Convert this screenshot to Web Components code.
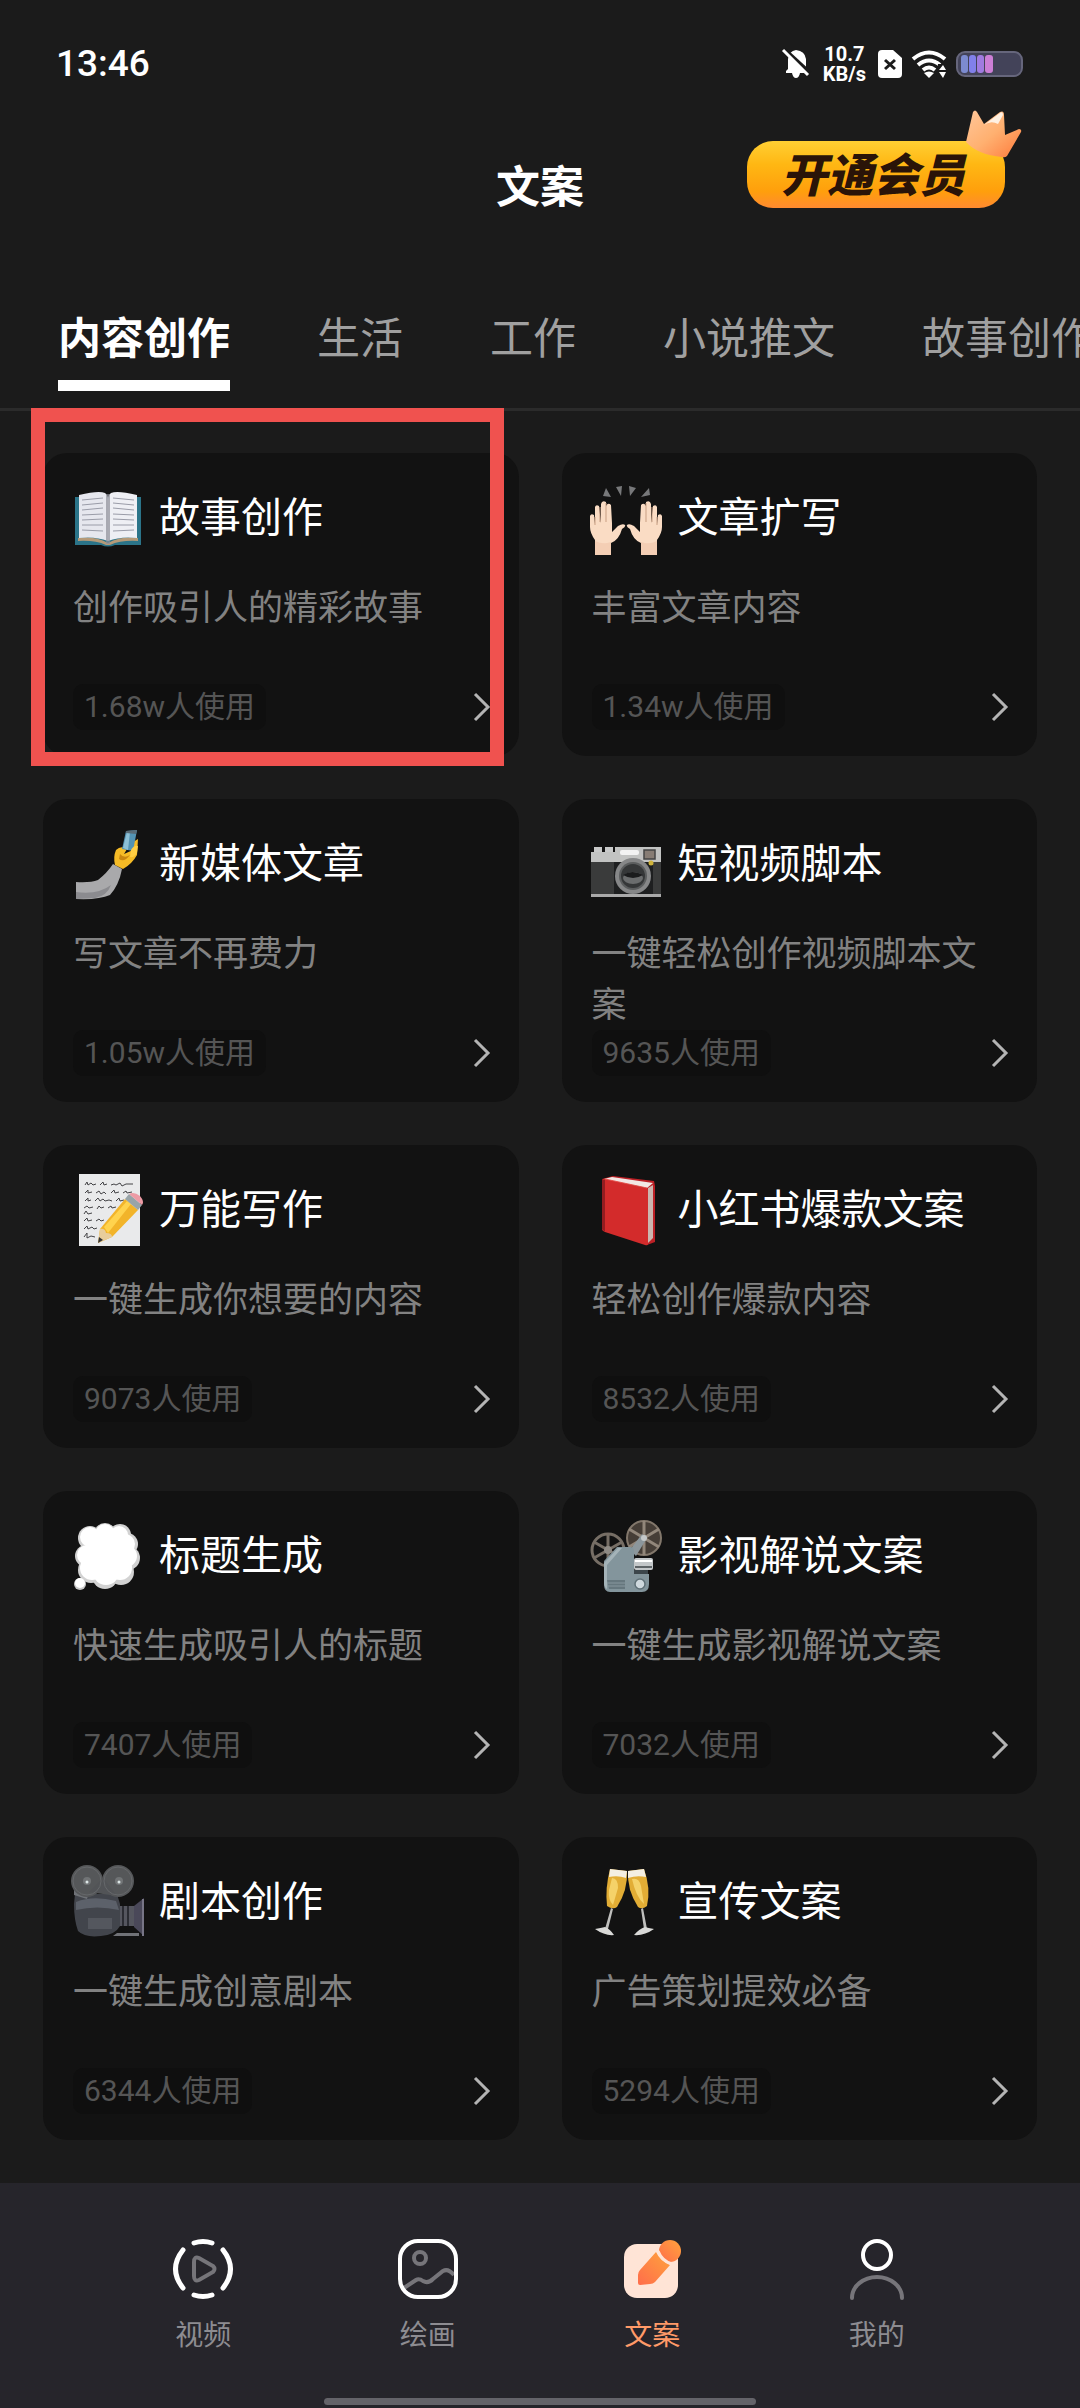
<!DOCTYPE html>
<html lang="zh-CN">
<head>
<meta charset="utf-8">
<meta name="viewport" content="width=device-width, initial-scale=1">
<title>文案</title>
<style>
  html { background: #1b1b1b; }
  body {
    margin: 0;
    color: #fff;
    font-family: Roboto, "Noto Sans CJK SC", sans-serif;
    -webkit-font-smoothing: antialiased;
  }
</style>
</head>
<body>
<copy-app></copy-app>

<script>
const RESET = `
  *, *::before, *::after { box-sizing: border-box; }
  button { margin: 0; padding: 0; border: 0; background: none; color: inherit; font: inherit; cursor: pointer; }
  a { color: inherit; text-decoration: none; }
  svg { display: block; overflow: visible; }
`;

function define(name, css, html) {
  const template = document.createElement('template');
  template.innerHTML = `<style>${RESET}${css}</style>${html}`;
  customElements.define(name, class extends HTMLElement {
    constructor() {
      super();
      this.attachShadow({ mode: 'open' }).append(template.content.cloneNode(true));
    }
  });
}

const HAND = `
  <path d="M3 71V56Q-2 49 -2 43V32Q-1 29 2 31L3 40L3 23Q4 20 7 22L9 39V20Q10 16 14 18L14 38V22Q16 18 19 21L20 39L20 48L26 42Q31 39 33 41Q34 43 30 45Q27 56 19 59V71Z" fill="#fadcc4"/>
  <path d="M8 23V38M14 19V38M3 33V41" stroke="#c99f83" stroke-width="1" fill="none"/>
  <path d="M3 57Q11 61 19 58V71H3Z" fill="#f0c4aa" opacity=".6"/>`;

/* Emoji-style artwork, each drawn on a 72 x 72 canvas */
const ART = {
  book: `
    <path d="M2 13H68V61H42Q35 64 28 61H2Z" fill="#2b7489"/>
    <path d="M5 54Q22 52 35 59Q48 52 65 54V57Q48 56 37 61H33Q22 56 5 57Z" fill="#b59a78"/>
    <path d="M6 11Q26 6 32 9Q35 11 35 15V57Q22 52 6 54Z" fill="#e6e7ee"/>
    <path d="M64 11Q44 6 38 9Q35 11 35 15V57Q48 52 64 54Z" fill="#eeeff4"/>
    <path d="M33 10H37V60H33Z" fill="#8d8f98" opacity=".7"/>
    <g stroke="#9a9ca8" stroke-width="1" fill="none">
      <path d="M9 16L30 14M9 21L30 19M9 26L30 24M9 31L30 30M9 36L30 35M9 41L30 41M9 46L30 47"/>
      <path d="M40 14L61 16M40 19L61 21M40 24L61 26M40 30L61 31M40 35L61 36M40 41L61 41M40 47L61 46"/>
    </g>`,
  hands: `
    <g fill="#77787a"><path d="M11 12L14 4L19 13ZM24 3L30 2L29 12ZM37 2L44 4L38 12ZM49 13L57 4L58 11Z"/></g>
    <g>${HAND}</g>
    <g transform="matrix(-1 0 0 1 68 0)">${HAND}</g>`,
  selfie: `
    <path d="M3 52Q17 53 25 50Q34 43 40 34L49 39Q46 55 37 65Q26 70 3 69Z" fill="#a9a9ab"/>
    <path d="M3 62Q25 65 38 55Q34 66 22 68L3 69Z" fill="#8b8b8f"/>
    <path d="M42 35Q40 27 43 20Q48 15 54 19L51 24L60 20Q57 15 60 12L65 9L64 25Q59 34 50 39Z" fill="#f5bb26"/>
    <path d="M47 24Q51 29 57 25Q51 33 46 29Z" fill="#c98610"/>
    <path d="M53 1L64 0L60 21L49 19Z" fill="#5393b3"/>
    <path d="M54 2L57 2L55 20L50 18Z" fill="#8cc0d6"/>
    <path d="M53 1L64 0L63 4L53 3Z" fill="#596b76"/>
    <path d="M58 20Q61 15 65 16L64 23Q61 28 57 27Z" fill="#ffce43"/>`,
  camera: `
    <path d="M2 17H10V24H2ZM13 17H21V24H13Z" fill="#c8c9c9"/>
    <path d="M-1 22H23V17H69V34H-1Z" fill="#c2c3c2"/>
    <path d="M-1 32H69V65H-1Z" fill="#3a3b3b"/>
    <path d="M22 32H61V65H22Z" fill="#1e1f20"/>
    <path d="M-1 64H69V67H-1Z" fill="#aaa"/>
    <rect x="28" y="20" width="19" height="5" rx="2" fill="#f3f3f3"/>
    <rect x="52" y="20" width="11" height="9" fill="#877c74" stroke="#444" stroke-width="1.5"/>
    <circle cx="59" cy="33" r="2.500" fill="#cfb33b"/>
    <circle cx="41" cy="46" r="18" fill="#868788"/>
    <circle cx="41" cy="46" r="14" fill="#5b5d5e"/>
    <circle cx="41" cy="46" r="12" fill="#353738"/>
    <ellipse cx="41" cy="48" rx="10" ry="6" fill="#6b6d6e"/>
    <path d="M31 45Q40 39 51 45Q41 51 31 45Z" fill="#1b1c1d"/>`,
  memo: `
    <path d="M6-2H67V70H6Z" fill="#e9eaeb"/>
    <g stroke="#444447" stroke-width="1" fill="none">
      <path d="M12 9L14 6L15 9L18 7L20 9L23 8M27 9L30 6L31 9L34 8M38 9L41 8L43 9L47 7L49 10L53 8L60 8"/>
      <path d="M12 17L15 14L15 17L19 16M23 17L26 15L28 18L31 16L33 18M38 17L41 14L42 17L46 16M50 17L53 15L54 17L59 16"/>
      <path d="M12 25L15 22L15 25L18 24M22 25L25 22L27 25L30 23L32 25L36 24L39 25M43 25L46 22L47 25L51 24"/>
      <path d="M11 32L14 30L16 32L20 31M24 33L26 30L28 32L31 31M35 32L38 30L39 32L43 31"/>
      <path d="M11 38L13 35L15 38L19 37M11 45L14 42L15 45L19 44M23 45L26 43L28 45L31 44"/>
      <path d="M11 53L14 50L15 53L19 51L21 53L24 52M11 61L14 57L14 62L18 60L22 61"/>
    </g>
    <path d="M25 67L27 53L52 23L65 34L39 61Z" fill="#f2b42a"/>
    <path d="M31 51L54 25L58 28L35 57Z" fill="#ffd34e"/>
    <path d="M25 67L27 53Q32 52 33 57Q39 57 39 61Z" fill="#e8cd9c"/>
    <path d="M25 67L26 61L30 64Z" fill="#353535"/>
    <path d="M52 23L56 18L69 29L65 34Z" fill="#98a4a8"/>
    <path d="M56 18Q61 15 67 20Q72 26 69 29Z" fill="#ed9ba5"/>`,
  redbook: `
    <path d="M10 3L21 0L62 5L63 10V66L55 69L52 11Z" fill="#bd2026"/>
    <path d="M12 3L20 1L61 7L55 12Z" fill="#f2e7e4"/>
    <path d="M56 12L61 9V62L55 68Z" fill="#cbb5af"/>
    <path d="M10 4Q10 3 12 3L54 12Q56 12 56 15V68Q56 70 53 69L13 56Q10 55 10 53Z" fill="#d32b2b"/>
    <path d="M10 4L13 4V56L10 53Z" fill="#941c20"/>
    <path d="M13 3L55 12" stroke="#e9514c" stroke-width="1"/>`,
  thought: `
    <g fill="#d2d2d2">
      <circle cx="17" cy="16" r="12"/><circle cx="32" cy="12" r="11"/><circle cx="47" cy="13" r="11"/><circle cx="54" cy="22" r="11"/>
      <circle cx="13" cy="34" r="11"/><circle cx="55" cy="36" r="12"/><circle cx="18" cy="48" r="13"/><circle cx="32" cy="54" r="13"/><circle cx="48" cy="50" r="13"/>
    </g>
    <g fill="#fff">
      <circle cx="17" cy="15" r="10"/><circle cx="32" cy="12" r="10"/><circle cx="46" cy="13" r="9"/><circle cx="52" cy="22" r="10"/>
      <circle cx="14" cy="33" r="10"/><circle cx="53" cy="34" r="11"/><circle cx="19" cy="46" r="12"/><circle cx="33" cy="50" r="13"/><circle cx="47" cy="46" r="12"/><circle cx="32" cy="30" r="18"/>
    </g>
    <circle cx="7" cy="62" r="6" fill="#c9c9c9"/><circle cx="7" cy="61" r="5" fill="#fff"/>`,
  projector: `
    <g fill="none" stroke="#766e65">
      <circle cx="16" cy="28" r="16" stroke-width="3"/>
      <path d="M16 12V44M2 20L30 36M2 36L30 20" stroke-width="3"/>
    </g>
    <circle cx="16" cy="28" r="4" fill="#8e8a84"/>
    <circle cx="52" cy="16" r="17" fill="#463e37" stroke="#82776b" stroke-width="2"/>
    <path d="M52-1V33M37 7L67 25M37 25L67 7" stroke="#92877b" stroke-width="3" fill="none"/>
    <path d="M50 12L55 16L44 34L38 28Z" fill="#8c979c"/>
    <circle cx="52" cy="16" r="3" fill="#c4c8c9"/>
    <path d="M12 39L25 25H38Q42 25 42 29V52H57V62Q57 70 50 70H18Q12 70 12 62Z" fill="#83959c"/>
    <path d="M12 41L26 26H30L15 43V67Q12 65 12 61Z" fill="#a4b3b8"/>
    <path d="M15 58H33V67H17Z" fill="#66777e"/>
    <path d="M15 61H33M15 64H33" stroke="#87989e" stroke-width="1"/>
    <rect x="42" y="36" width="19" height="12" rx="2" fill="#c3c7c9"/>
    <path d="M43 39H60" stroke="#fff" stroke-width="2"/><path d="M43 45H60" stroke="#5e6467" stroke-width="2"/>
    <path d="M42 48H56V52H42Z" fill="#3c464b"/>
    <circle cx="48" cy="62" r="5" fill="#cfd9de" stroke="#5f7077" stroke-width="1.500"/>`,
  movie: `
    <path d="M2 26H44L47 36V58Q42 67 28 68Q12 70 5 63Q1 52 1 36Z" fill="#42454c"/>
    <path d="M1 18L16 24L14 31L1 27Z" fill="#6f7277"/>
    <circle cx="14" cy="13" r="16" fill="#555759"/><circle cx="45" cy="13" r="16" fill="#555759"/>
    <path d="M16 24L30 10L44 28Z" fill="#525457"/>
    <circle cx="14" cy="13" r="14" fill="none" stroke="#66686b" stroke-width="1"/>
    <circle cx="45" cy="13" r="14" fill="none" stroke="#66686b" stroke-width="1"/>
    <circle cx="14" cy="13" r="4" fill="#717476"/><circle cx="46" cy="13" r="4" fill="#717476"/>
    <circle cx="14" cy="14" r="1.500" fill="#dce6e6"/><circle cx="46" cy="14" r="1.500" fill="#dce6e6"/>
    <path d="M3 34Q20 27 43 33L46 42Q24 37 3 42Z" fill="#5c616a"/>
    <rect x="15" y="50" width="24" height="11" fill="#54575e"/>
    <path d="M47 38H61V58H47Z" fill="#55565f"/><path d="M50 38V58M55 38V58" stroke="#2b2c33" stroke-width="2"/>
    <path d="M61 38L71 30V68L61 59Z" fill="#4a4859"/><path d="M69 31H71V68H69Z" fill="#777586"/>
    <path d="M44 65H66V68H40Z" fill="#707277"/>`,
  cheers: `
    <path d="M18 1L35 3Q36 22 25 39Q21 42 15 38Q13 20 18 1Z" fill="#e2ad35"/>
    <path d="M36 3L52 1Q59 20 55 38Q50 42 46 39Q35 22 36 3Z" fill="#e2ad35"/>
    <path d="M18 1L35 3L34 10Q26 7 17 9Z" fill="#f4efe2"/><path d="M36 3L52 1L54 9Q45 7 36 10Z" fill="#f4efe2"/>
    <path d="M20 10Q26 10 26 20L21 37Q16 32 17 22ZM40 11Q47 9 49 18L52 36Q44 29 40 11Z" fill="#f5d269"/>
    <path d="M19 40L21 41L16 61L13 61ZM49 41L51 40L55 61L52 61Z" fill="#bfbfbd"/>
    <path d="M3 61Q9 60 13 59Q18 61 22 67Q13 68 3 61ZM62 61Q56 60 53 59Q47 61 42 67Q52 68 62 61Z" fill="#d9d9d7"/>`
};

const NAV_ART = {
  video: `
    <g fill="none" stroke-linecap="round" stroke-width="5">
      <path d="M21 4Q30 1 39 4M21 56Q30 59 39 56M10 11Q-5 30 10 49M50 11Q65 30 50 49" stroke="#fff"/>
      <path d="M21 23Q21 17 26 19L40 27Q43 30 40 33L26 41Q21 43 21 37Z" stroke="#76757a" stroke-width="4"/>
    </g>`,
  image: `
    <g fill="none">
      <path d="M6 49L18 41Q21 39 25 42Q30 45 35 40L45 32Q50 29 56 36" stroke="#76757a" stroke-width="4"/>
      <circle cx="22" cy="19" r="6" stroke="#76757a" stroke-width="4"/>
      <rect x="2" y="2" width="56" height="56" rx="18" stroke="#fff" stroke-width="4"/>
    </g>`,
  doc: `
    <defs><linearGradient id="pen" x1="1" y1="0" x2="0" y2="1"><stop offset="0" stop-color="#ffa33c"/><stop offset="1" stop-color="#ff6d4b"/></linearGradient></defs>
    <rect x="2" y="5" width="54" height="54" rx="13" fill="#ffe4d6"/>
    <path d="M34 13Q38 22 48 26L33 43Q31 45 28 45L18 46Q16 46 16 44V36Q16 33 18 31Z" fill="url(#pen)"/>
    <circle cx="48" cy="12" r="11" fill="url(#pen)"/>
    <path d="M36 12Q40 22 50 25" fill="none" stroke="#ffe4d6" stroke-width="3"/>`,
  me: `
    <g fill="none" stroke-width="4">
      <circle cx="30" cy="16" r="14" stroke="#fff"/>
      <path d="M5 59A25 21 0 0 1 55 59" stroke="#76757a" stroke-linecap="round"/>
    </g>`
};

define('status-bar', `
  :host { display: flex; justify-content: space-between; align-items: center; height: 128px; padding: 0 57px 0 56px; }
  time { font-size: 37px; line-height: 48px; font-weight: 500; }
  .right { display: flex; align-items: center; }
  .speed { display: grid; margin: 0 12px 0 14px; text-align: center; font-weight: 700; line-height: 20px; font-size: 20px; }
  .wifi { margin: 0 9px 0 10px; }
`, `
  <time>13:46</time>
  <div class="right">
    <svg width="26" height="30" viewBox="0 0 26 30">
      <path d="M3 24V22L5 20V10Q6 2 13 1Q22 2 23 10V19L25 23V24H17Q16 29 13 29Q10 29 9 24Z" fill="#fff"/>
      <path d="M2 1L27 24" stroke="#1b1b1b" stroke-width="4"/><path d="M0 1L25 26" stroke="#fff" stroke-width="3"/>
    </svg>
    <div class="speed"><span>10.7</span><span>KB/s</span></div>
    <svg width="24" height="28" viewBox="0 0 24 28">
      <path d="M4 0H15L24 8V24Q24 28 20 28H4Q0 28 0 24V4Q0 0 4 0Z" fill="#fff"/>
      <path d="M7 10L17 19M17 10L7 19" stroke="#1b1b1b" stroke-width="3"/>
    </svg>
    <svg class="wifi" width="35" height="28" viewBox="0 0 35 28">
      <g fill="none" stroke="#fff" stroke-width="4"><path d="M1 9Q17-4 33 9M6 15Q17 6 28 15M11 20Q17 15 23 20"/></g>
      <path d="M12 23Q17 20 22 23L17 28Z" fill="#fff"/>
      <path d="M26 14H36V29H24Z" fill="#1b1b1b"/>
      <path d="M27 20L31 15L34 20ZM27 22L31 28L34 22Z" fill="#fff"/>
    </svg>
    <svg width="67" height="26" viewBox="0 0 67 26">
      <rect x="1" y="1" width="65" height="24" rx="8" fill="#434359" stroke="#66667c" stroke-width="2"/>
      <rect x="5" y="4" width="7" height="18" rx="3" fill="#7c8bd0"/><rect x="13" y="4" width="7" height="18" rx="3" fill="#8180ea"/>
      <rect x="21" y="4" width="7" height="18" rx="3" fill="#a07be0"/><rect x="29" y="4" width="8" height="18" rx="3" fill="#cc7fd6"/>
    </svg>
  </div>
`);

define('vip-button', `
  :host { display: block; position: relative; }
  button {
    display: block; height: 67px; padding: 4px 40px 0 34px; border-radius: 26px;
    background: linear-gradient(#ffcf33, #ffb713 35%, #ff9f0c 75%, #ff8a30);
    color: #2a1408; font-size: 46px; line-height: 63px; font-weight: 900; font-style: italic;
  }
  svg { position: absolute; right: -17px; top: -31px; }
`, `
  <button type="button"><slot></slot></button>
  <svg width="56" height="48" viewBox="0 0 56 48" aria-hidden="true">
    <defs><linearGradient id="g" x1="0" y1="0" x2="1" y2="1"><stop offset="0" stop-color="#ffc79a"/><stop offset=".5" stop-color="#ffb070"/><stop offset="1" stop-color="#ff7a3a"/></linearGradient></defs>
    <path d="M0 32L7 2Q9-1 11 2L18 14L34 2Q38 0 38 5L39 25L53 19Q56 19 55 22L41 46Q39 48 36 47Q12 45 0 32Z" fill="url(#g)"/>
    <path d="M18 15L34 3Q37 1 37 5L32 14Q25 10 18 15Z" fill="#fff1e2"/>
  </svg>
`);

define('app-header', `
  :host { display: grid; grid-template-columns: 1fr auto 1fr; align-items: center; height: 118px; padding: 0 75px; }
  h1 { grid-column: 2; margin: 0; padding-top: 2px; font-size: 44px; line-height: 60px; font-weight: 700; }
  vip-button { justify-self: end; align-self: start; margin-top: 13px; }
`, `
  <h1><slot></slot></h1>
  <vip-button>开通会员</vip-button>
`);

define('tab-bar', `
  :host { display: flex; gap: 87px; padding: 66px 0 17px 58px; border-bottom: 3px solid #2b2b2b; overflow: hidden; white-space: nowrap; }
`, `<slot></slot>`);

define('tab-item', `
  :host { display: block; flex: none; }
  button { display: block; padding-bottom: 14px; border-bottom: 11px solid transparent; color: #a0a0a0; font-size: 43px; line-height: 54px; }
  :host([selected]) button { color: #fff; font-weight: 700; border-color: #fff; }
`, `<button type="button"><slot></slot></button>`);

define('highlight-frame', `
  :host { display: block; box-sizing: border-box; position: absolute; inset: -45px 15px -10px -12px; border: 14px solid #f0524f; pointer-events: none; }
`, ``);

customElements.define('tool-card', class extends HTMLElement {
  constructor() {
    super();
    this.attachShadow({ mode: 'open' }).innerHTML = `
      <style>${RESET}
        :host { display: block; position: relative; }
        a { display: block; padding: 31px 29px 26px 30px; border-radius: 24px; background: #121212; }
        .head { display: flex; align-items: center; gap: 14px; height: 72px; margin-bottom: 27px; }
        h2 { margin: 0 0 4px; font-size: 41px; line-height: 56px; font-weight: 400; white-space: nowrap; }
        p { margin: 0; min-height: 102px; color: #828282; font-size: 35px; line-height: 51px; }
        .foot { display: flex; justify-content: space-between; align-items: center; margin-top: -1px; }
        .count { height: 46px; padding: 0 11px; border-radius: 10px; background: #0f0f0f; color: #555; font-size: 30px; line-height: 46px; }
      </style>
      <a href="#">
        <div class="head">
          <svg width="72" height="72" viewBox="0 0 72 72" aria-hidden="true">${ART[this.getAttribute('art')]}</svg>
          <h2><slot name="title"></slot></h2>
        </div>
        <p><slot></slot></p>
        <div class="foot">
          <span class="count"><slot name="count"></slot></span>
          <svg width="17" height="28" viewBox="0 0 17 28" aria-hidden="true"><path d="M2 1L15 14L2 27" fill="none" stroke="#b4b4b4" stroke-width="3"/></svg>
        </div>
      </a>
      <slot name="overlay"></slot>`;
  }
});

customElements.define('nav-item', class extends HTMLElement {
  constructor() {
    super();
    this.attachShadow({ mode: 'open' }).innerHTML = `
      <style>${RESET}
        :host { flex: 1; display: flex; justify-content: center; }
        button { display: grid; justify-items: center; gap: 20px; color: #8d8c91; font-size: 28px; line-height: 34px; }
        :host([selected]) button { color: #ff9a68; }
      </style>
      <button type="button">
        <svg width="60" height="60" viewBox="0 0 60 60" aria-hidden="true">${NAV_ART[this.getAttribute('art')]}</svg>
        <slot></slot>
      </button>`;
  }
});

define('bottom-nav', `
  :host { display: flex; flex-direction: column; align-items: center; background: #26252b; padding: 56px 0 3px; }
  nav { display: flex; align-self: stretch; padding: 0 91px; margin-bottom: 45px; }
  .home { width: 40%; height: 7px; border-radius: 4px; background: #646369; }
`, `
  <nav><slot></slot></nav>
  <div class="home"></div>
`);

const TOOLS = [
  ['book', '故事创作', '创作吸引人的精彩故事', '1.68w人使用'],
  ['hands', '文章扩写', '丰富文章内容', '1.34w人使用'],
  ['selfie', '新媒体文章', '写文章不再费力', '1.05w人使用'],
  ['camera', '短视频脚本', '一键轻松创作视频脚本文案', '9635人使用'],
  ['memo', '万能写作', '一键生成你想要的内容', '9073人使用'],
  ['redbook', '小红书爆款文案', '轻松创作爆款内容', '8532人使用'],
  ['thought', '标题生成', '快速生成吸引人的标题', '7407人使用'],
  ['projector', '影视解说文案', '一键生成影视解说文案', '7032人使用'],
  ['movie', '剧本创作', '一键生成创意剧本', '6344人使用'],
  ['cheers', '宣传文案', '广告策划提效必备', '5294人使用']
];

define('copy-app', `
  :host { display: flex; flex-direction: column; min-height: 100vh; background: #1b1b1b; }
  main { flex: 1; display: grid; grid-template-columns: 1fr 1fr; align-content: start; gap: 43px; padding: 42px 43px 43px; }
`, `
  <status-bar></status-bar>
  <app-header>文案</app-header>
  <tab-bar>
    <tab-item selected>内容创作</tab-item>
    <tab-item>生活</tab-item>
    <tab-item>工作</tab-item>
    <tab-item>小说推文</tab-item>
    <tab-item>故事创作</tab-item>
  </tab-bar>
  <main>
    ${TOOLS.map(([art, title, text, count], i) => `
      <tool-card art="${art}">
        <span slot="title">${title}</span>${text}<span slot="count">${count}</span>
        ${i === 0 ? '<highlight-frame slot="overlay"></highlight-frame>' : ''}
      </tool-card>`).join('')}
  </main>
  <bottom-nav>
    <nav-item art="video">视频</nav-item>
    <nav-item art="image">绘画</nav-item>
    <nav-item art="doc" selected>文案</nav-item>
    <nav-item art="me">我的</nav-item>
  </bottom-nav>
`);
</script>
</body>
</html>
